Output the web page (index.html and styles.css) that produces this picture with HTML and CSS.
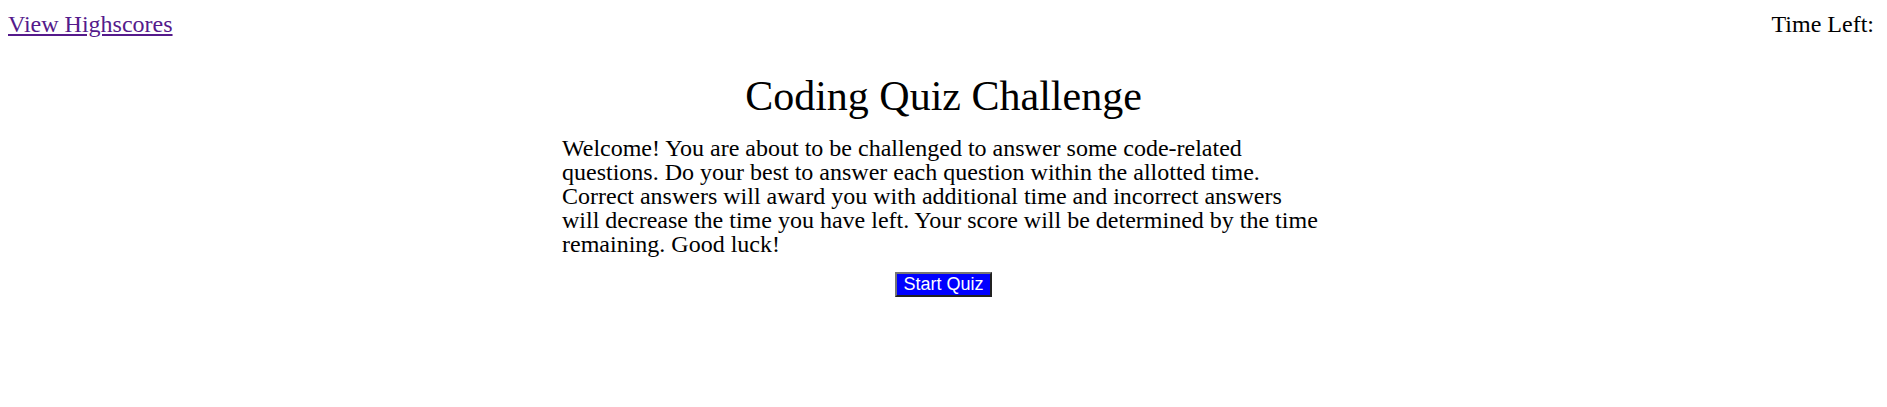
FILE: index.html
```html
<!DOCTYPE html>
<html lang="en">
<head>
<meta charset="utf-8">
<title>Coding Quiz</title>
<link rel="stylesheet" href="styles.css">
</head>
<body>
<header class="topbar">
  <a class="scores-link" href="#">View Highscores</a>
  <div class="timer">Time Left: <span class="time-value"></span></div>
</header>
<main class="quiz">
  <h1 class="quiz-title">Coding Quiz Challenge</h1>
  <p class="quiz-intro">Welcome! You are about to be challenged to answer some code-related questions. Do your best to answer each question within the allotted time. Correct answers will award you with additional time and incorrect answers will decrease the time you have left. Your score will be determined by the time remaining. Good luck!</p>
  <button class="start-btn" type="button">Start Quiz</button>
</main>
</body>
</html>
```
FILE: styles.css
```css
body {
  margin: 8px;
  font-family: "Liberation Serif", "Times New Roman", serif;
  color: #000;
  background: #fff;
}

.topbar {
  display: flex;
  justify-content: space-between;
  align-items: flex-start;
  padding-top: 3px;
  font-size: 24px;
}

.scores-link {
  color: #551a8b;
  text-decoration: underline;
}

.timer {
  padding-right: 5px;
}

.quiz {
  display: flex;
  flex-direction: column;
  align-items: center;
  margin-top: 34px;
}

.quiz-title {
  margin: 0;
  font-size: 42px;
  font-weight: normal;
}

.quiz-intro {
  width: 763px;
  margin: 16px 0 16px;
  font-size: 24px;
  line-height: 24px;
}

.start-btn {
  font-family: "Liberation Sans", Arial, sans-serif;
  font-size: 18px;
  color: #fff;
  background: #0000ff;
  border: 2px outset #767676;
  padding: 0 6px;
}
```
